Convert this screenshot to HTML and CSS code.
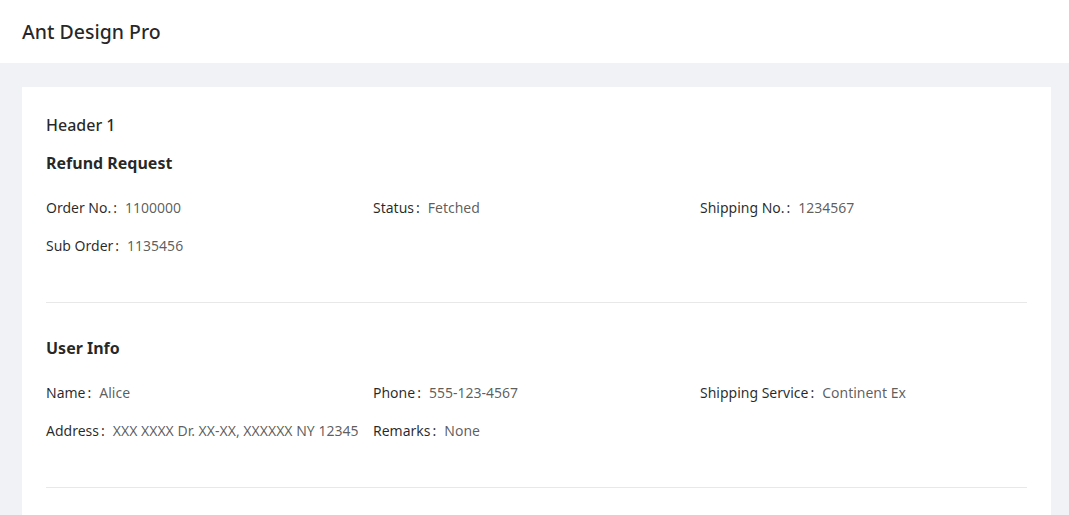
FILE: index.html
```html
<!DOCTYPE html>
<html lang="en">
<head>
<meta charset="utf-8">
<title>Ant Design Pro</title>
<link rel="stylesheet" href="styles.css">
</head>
<body>
<header class="topbar">
  <div class="brand">Ant Design Pro</div>
</header>
<main class="content">
  <section class="card">
    <div class="card-title">Header 1</div>

    <div class="desc">
      <div class="desc-title">Refund Request</div>
      <div class="desc-grid">
        <div class="item"><span class="label">Order No.</span><span class="value">1100000</span></div>
        <div class="item"><span class="label">Status</span><span class="value">Fetched</span></div>
        <div class="item"><span class="label">Shipping No.</span><span class="value">1234567</span></div>
        <div class="item"><span class="label">Sub Order</span><span class="value">1135456</span></div>
      </div>
    </div>

    <hr class="divider">

    <div class="desc">
      <div class="desc-title">User Info</div>
      <div class="desc-grid">
        <div class="item"><span class="label">Name</span><span class="value">Alice</span></div>
        <div class="item"><span class="label">Phone</span><span class="value">555-123-4567</span></div>
        <div class="item"><span class="label">Shipping Service</span><span class="value">Continent Ex</span></div>
        <div class="item"><span class="label">Address</span><span class="value">XXX XXXX Dr. XX-XX, XXXXXX NY 12345</span></div>
        <div class="item"><span class="label">Remarks</span><span class="value">None</span></div>
      </div>
    </div>

    <hr class="divider">
  </section>
</main>
</body>
</html>
```

FILE: styles.css
```css
* { box-sizing: border-box; }

html, body {
  margin: 0;
  padding: 0;
}

body {
  font-family: "Noto Sans", "Open Sans", "DejaVu Sans", sans-serif;
  font-size: 14px;
  color: rgba(0, 0, 0, 0.85);
  background: #f0f2f5;
  min-height: 515px;
}

.topbar {
  height: 63px;
  background: #fff;
  display: flex;
  align-items: center;
  padding: 0 22px;
}

.brand {
  font-size: 19.5px;
  font-weight: 500;
  color: rgba(0, 0, 0, 0.85);
  line-height: 28px;
}

.content {
  padding: 24px 18px 0 22px;
}

.card {
  background: #fff;
  padding: 26px 24px 24px;
}

.card-title {
  font-size: 16px;
  font-weight: 500;
  line-height: 24px;
  margin-bottom: 14px;
}

.desc-title {
  font-size: 16px;
  font-weight: 700;
  line-height: 24px;
  color: rgba(0, 0, 0, 0.85);
  margin-bottom: 22px;
}

.desc-grid {
  display: grid;
  grid-template-columns: repeat(3, 1fr);
}

.item {
  display: flex;
  padding-bottom: 16px;
  line-height: 22px;
  white-space: nowrap;
}

.label {
  color: rgba(0, 0, 0, 0.85);
}

.label::after {
  content: ":";
  margin: 0 8px 0 2px;
}

.value {
  color: rgba(0, 0, 0, 0.65);
}

.divider {
  border: 0;
  border-top: 1px solid #e8e8e8;
  margin: 29px 0 33px;
}
```
